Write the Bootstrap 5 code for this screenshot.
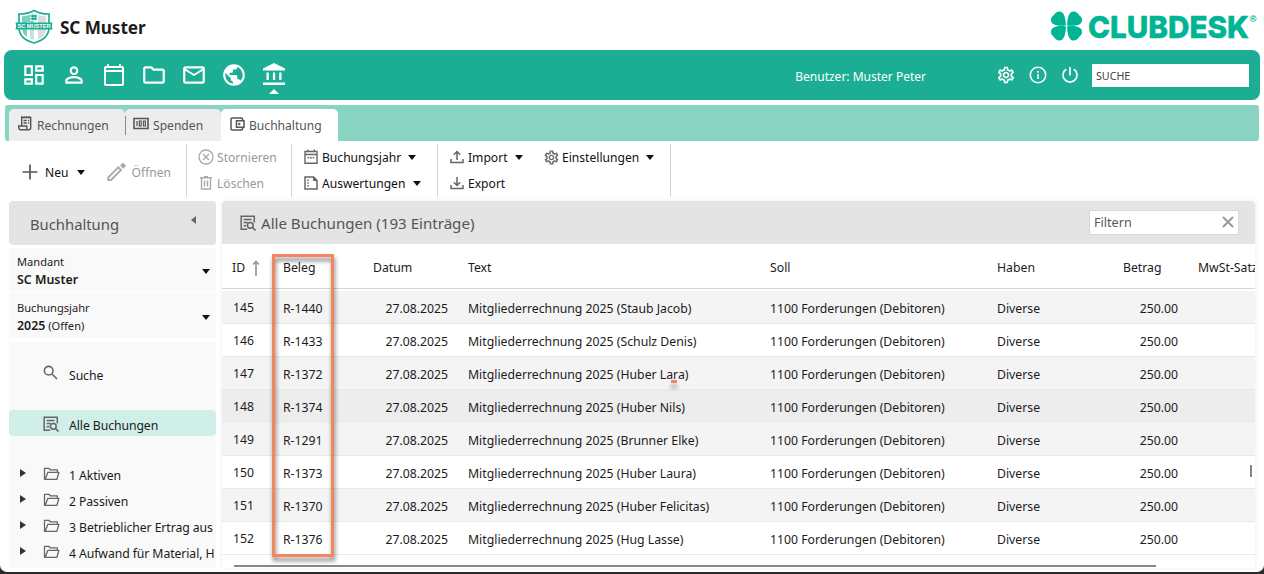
<!DOCTYPE html>
<html lang="de">
<head>
<meta charset="utf-8">
<title>SC Muster – Buchhaltung</title>
<link rel="stylesheet" href="https://cdn.jsdelivr.net/npm/bootstrap@5.3.0/dist/css/bootstrap.min.css">
<style>
html{background:#2b2b2b}
body{font-family:"Noto Sans","Open Sans",sans-serif;font-size:12.25px;line-height:16px;color:#1b1b1b;background:#2b2b2b;height:574px;overflow:hidden}
svg{display:block;flex:none}
.ic{fill:currentColor}
.window{height:572px;background:#fff;border-radius:0 0 7px 7px;overflow:hidden}
.brandbar{height:50px;padding:0 6px 0 14px}
.club{font-size:17.2px;font-weight:700;letter-spacing:-.1px;margin-left:6px;padding-top:5px}
.mainbar{height:50px;margin:0 4px;background:#1bae94;border-radius:8px;color:#fff;padding:0 11px 0 17px}
.nav-item-i{width:40px;height:50px;position:relative}
.nav-item-i.on::after{content:"";position:absolute;bottom:6px;border:5px solid transparent;border-top:0;border-bottom-color:#fff}
.user{font-size:12px;margin-right:64px;padding-top:3px}
.tool-i{width:32px}
.search-in{width:157px;height:23px;background:#fff;color:#444;font-size:10.7px;padding:1px 4px 0}
.tabstrip{height:36px;margin:5px 5px 0;background:#8ad4c4;border-radius:3px;padding:4px 4px 0}
.tabx{height:32px;background:#ededed;color:#555;border-radius:5px 5px 0 0;font-size:12.1px;padding-left:9px}
.tabx.on{background:#fff}
.tabx span{padding-top:1px}
.tabx svg{margin-top:-3px;color:#555}
.tabx + .tabx:not(.on)::before{content:"";width:1px;height:19px;background:#888;margin-left:-9px;margin-right:7px}
.ribbon{height:60px;color:#111;font-size:12.1px}
.ribbon .dis{color:#999}
.ribbon span{padding-top:2px}
.grp{border-right:1px solid #d4d4d4;height:53px;margin-top:3px}
.rrow{height:26px}
.gi{color:#666}
.dis .gi{color:#aaa}
.caret{border:4.5px solid transparent;border-top:5px solid #111;border-bottom:0;flex:none;margin-top:1px}
.side{width:207px}
.side-h,.main-h{background:#e4e4e4;color:#555}
.side-h{height:44px;border-radius:4px;padding:1px 20px 0 21px;font-size:14.8px}
.pick{background:#f9f9f9;padding:2px 6px 0 8px;font-size:11.1px}
.pick b{font-size:12.4px;font-weight:600}
.tree{background:#f9f9f9;height:226px;overflow:hidden;padding-top:18px;white-space:nowrap;letter-spacing:-.09px}
.tn{height:26px;padding-left:11px;padding-top:5px}
.tn .tri{width:6px;margin-right:17px;margin-top:-5px}
.tn .fi{width:17px;margin-right:9px;margin-top:-4px;color:#666}
.tri::before{content:"";display:block;border:4.5px solid transparent;border-left:6px solid #333;border-right:0}
.tn.none .tri::before{visibility:hidden}
.tn.sel{background:#d0efe8;border-radius:4px}
.main-p{width:1033px;height:367px;box-shadow:0 0 4px rgba(0,0,0,.08);position:relative}
.main-h{height:43px;border-radius:4px 4px 0 0;padding:0 16px 0 18px;font-size:15.1px}
.filter{width:150px;height:25px;background:#fff;border:1px solid #d8d8d8;font-size:12.6px;color:#555;padding:2px 4px 0;margin-top:-1px}
.gr{display:grid;grid-template-columns:61px 90px 95px 302px 227px 126px 75px 57px;align-items:center;white-space:nowrap;overflow:hidden}
.gr.head{height:45px;border-bottom:1px solid #d6d6d6;margin-bottom:2px;padding-top:4px}
.gr.line{height:33px;border-bottom:1px solid #e9e9e9;padding-top:4px}
.gr.line.alt{background:#f4f4f4}
.gr.line.hov{background:#ededed;border-color:#ededed}
.gr>:first-child{padding-left:10px}
.gr.line>:first-child{padding-left:11px;margin-top:-2px}
.num{text-align:right;padding-right:20px}
.hbar{width:922px;height:2px;background:#888;margin:10px 0 0 12px}
.vbar{position:absolute;right:3px;top:264px;width:2px;height:12px;background:#7d8685}
.frame{position:absolute;left:50px;top:53px;width:62px;height:303px;border:3px solid #f4865f;filter:drop-shadow(1px 4px 2px rgba(0,0,0,.5))}
.dot{position:absolute;left:449px;top:179px;width:6px;height:3px;background:#f4865f;box-shadow:0 5px 4px rgba(0,0,0,.4)}
</style>
</head>
<body>
<svg width="0" height="0" class="position-absolute">
<symbol id="dash" viewBox="0 0 24 24"><path d="M19 5v2h-4V5h4M9 5v6H5V5h4m10 8v6h-4v-6h4M9 17v2H5v-2h4M21 3h-8v6h8V3zM11 3H3v10h8V3zm10 8h-8v10h8V11zm-10 4H3v6h8v-6z"/></symbol>
<symbol id="person" viewBox="0 0 24 24"><path d="M12 5.9a2.1 2.1 0 1 1 0 4.2 2.1 2.1 0 0 1 0-4.2m0 9c2.97 0 6.1 1.46 6.1 2.1v1.1H5.9V17c0-.64 3.13-2.1 6.1-2.1M12 4C9.79 4 8 5.790 8 8s1.790 4 4 4 4-1.790 4-4-1.790-4-4-4zm0 9c-2.670 0-8 1.340-8 4v3h16v-3c0-2.660-5.330-4-8-4z"/></symbol>
<symbol id="cal" viewBox="0 0 24 24"><path d="M20 3h-1V1h-2v2H7V1H5v2H4c-1.100 0-2 .9-2 2v16c0 1.100.9 2 2 2h16c1.100 0 2-.9 2-2V5c0-1.100-.9-2-2-2zm0 18H4V9h16v12zm0-14H4V5h16v2z"/></symbol>
<symbol id="folder" viewBox="0 0 24 24"><path d="M9.170 6l2 2H20v10H4V6h5.170M10 4H4c-1.100 0-2 .9-2 2v12c0 1.100.9 2 2 2h16c1.100 0 2-.9 2-2V8c0-1.100-.9-2-2-2h-8l-2-2z"/></symbol>
<symbol id="mail" viewBox="0 0 24 24"><path d="M22 6c0-1.100-.9-2-2-2H4c-1.100 0-2 .9-2 2v12c0 1.100.9 2 2 2h16c1.100 0 2-.9 2-2V6zm-2 0l-8 5-8-5h16zm0 12H4V8l8 5 8-5v10z"/></symbol>
<symbol id="globe" viewBox="0 0 24 24"><path d="M12 2C6.480 2 2 6.480 2 12s4.480 10 10 10 10-4.480 10-10S17.520 2 12 2zm-1 17.930c-3.950-.490-7-3.850-7-7.930 0-.620.080-1.210.210-1.790L9 15v1c0 1.100.9 2 2 2v1.930zm6.900-2.540c-.260-.810-1-1.390-1.900-1.390h-1v-3c0-.550-.450-1-1-1H8v-2h2c.550 0 1-.450 1-1V7h2c1.100 0 2-.9 2-2v-.410c2.930 1.190 5 4.060 5 7.410 0 2.080-.8 3.970-2.100 5.390z"/></symbol>
<symbol id="bank" viewBox="0 0 24 24"><path d="M12 1 1 6.500V8.500h22V6.500zM4.500 10.500h2.300v7.500H4.500zM10.900 10.500h2.300v7.500h-2.300zM17.200 10.500h2.300v7.500h-2.300zM1 20.500h22V23H1z"/></symbol>
<symbol id="gear" viewBox="0 0 24 24"><path d="M19.430 12.980c.040-.320.070-.640.070-.980 0-.340-.030-.660-.070-.980l2.110-1.650c.190-.150.240-.420.120-.640l-2-3.460a.5.5 0 0 0-.610-.220l-2.490 1c-.520-.4-1.080-.730-1.690-.980l-.380-2.650A.488.488 0 0 0 14 2h-4c-.250 0-.460.180-.490.420l-.380 2.650c-.610.250-1.170.590-1.690.980l-2.490-1a.566.566 0 0 0-.180-.030c-.170 0-.340.090-.430.250l-2 3.460c-.130.220-.070.490.120.640l2.110 1.650c-.040.320-.070.650-.070.980 0 .330.030.660.070.980l-2.110 1.650c-.190.150-.240.420-.120.640l2 3.460a.5.5 0 0 0 .610.220l2.490-1c.520.4 1.080.730 1.690.980l.380 2.650c.030.240.240.420.490.420h4c.250 0 .460-.180.490-.420l.380-2.650c.610-.250 1.170-.590 1.690-.980l2.490 1c.060.020.120.030.180.030.170 0 .340-.090.430-.250l2-3.460c.120-.220.070-.490-.120-.640l-2.110-1.650zm-1.980-1.710c.040.310.050.520.050.730 0 .210-.020.430-.050.730l-.140 1.130.890.7 1.080.840-.7 1.210-1.270-.510-1.040-.420-.9.680c-.430.320-.840.560-1.250.730l-1.060.430-.160 1.130-.2 1.350h-1.400l-.190-1.350-.160-1.130-1.060-.430c-.430-.180-.830-.410-1.230-.710l-.910-.7-1.060.430-1.270.510-.7-1.210 1.080-.840.890-.7-.140-1.130c-.030-.310-.050-.540-.050-.740s.020-.430.050-.730l.140-1.130-.890-.7-1.080-.840.7-1.210 1.270.510 1.040.420.9-.680c.430-.320.840-.560 1.250-.730l1.060-.430.160-1.130.2-1.350h1.390l.190 1.350.160 1.130 1.060.430c.430.180.830.410 1.230.710l.910.7 1.060-.430 1.270-.510.7 1.210-1.070.850-.890.7.140 1.130zM12 8c-2.210 0-4 1.790-4 4s1.790 4 4 4 4-1.790 4-4-1.790-4-4-4zm0 6c-1.100 0-2-.9-2-2s.9-2 2-2 2 .9 2 2-.9 2-2 2z"/></symbol>
<symbol id="list" viewBox="0 0 16 16"><path d="M14.300 7.500V1.200H1.200v13h6M3.700 4.500h7.800M3.700 7.500h4M3.700 10.700h2.500" fill="none" stroke="currentColor" stroke-width="1.500"/><circle cx="10.300" cy="10.300" r="2.900" fill="none" stroke="currentColor" stroke-width="1.500"/><path d="m12.300 12.300 3.200 3.200" stroke="currentColor" stroke-width="1.600"/></symbol>
<symbol id="open" viewBox="0 0 17 14"><path d="M3.200 12.300H1.500V1.300h4.300l1.500 1.500h7v2.400M2.200 12.300 4.900 5.300h11l-2 7z" fill="none" stroke="currentColor" stroke-width="1.300" stroke-linejoin="round"/></symbol>
</svg>

<div class="window">
<header class="brandbar d-flex align-items-center">
  <svg width="40" height="36" viewBox="0 0 40 36" style="margin-top:3px">
    <path d="M20 1.500c4 2.500 9 3.500 15 3.500v13.500c0 8-6 13-15 15.500C11 31.500 5 26.500 5 18.500V5c6 0 11-1 15-3.500z" fill="#fff" stroke="#1bae94" stroke-width="1.700"/>
    <path d="M20 4c-3.500 2-7.500 3-12 3.200V19c0 4 2 7 5 9V13h7z" fill="#7fcdbe"/><path d="M24 6c2.500.8 5 1.200 8 1.300V19c0 6-3 9.500-8 11.500z" fill="#dcdcdc"/><path d="M16 13h4v18l-4-1.500z" fill="#bfe5dd"/>
    <path d="M16.500 5h7v7h-7z" fill="#fff"/><g fill="#1bae94"><circle cx="18.600" cy="7" r="1.500"/><circle cx="21.400" cy="7" r="1.500"/><circle cx="18.600" cy="9.800" r="1.500"/><circle cx="21.400" cy="9.800" r="1.500"/></g>
    <path d="M1.500 13.500h37l-.7 3.500.7 3.500h-37l.7-3.500z" fill="#1bae94"/>
    <text x="3.500" y="19.300" font-family="Liberation Sans" font-weight="700" font-size="6.200" fill="#fff" textLength="33" lengthAdjust="spacingAndGlyphs">SC MUSTER</text>
  </svg>
  <div class="club">SC Muster</div>
  <svg class="ms-auto" width="210" height="36" viewBox="0 0 210 36" fill="#00b594">
    <path d="M18 18.500C11.500 19.300 3.500 18.500 3 13.500c-.3-3 1.800-4.200 2.700-5.200S7.500 5.100 10.500 4.500c6-1 7 7 7.500 14zM19 18.500c6.500.8 14.500.5 15-5 .3-3-1.800-4.200-2.700-5.200S29.500 5.100 26.500 4.500c-6-1-7 7-7.500 14zM18 19.500C11.500 18.500 3.500 19 3 24.500c-.3 3 1.800 4.200 2.700 5.200S7.500 32.900 10.500 33.500c6 1 7-7 7.500-14zM19 19.500c6.500-1 14.500-.5 15 5 .3 3-1.800 4.200-2.700 5.200S29.500 32.900 26.500 33.500c-6 1-7-7-7.500-14z"/>
    <text x="40" y="30.500" font-family="Inter" font-weight="800" font-size="30.500" stroke="#00b594" stroke-width=".5" textLength="161" lengthAdjust="spacingAndGlyphs">CLUBDESK</text>
    <text x="201.500" y="15" font-family="Liberation Sans" font-size="9.500" font-weight="700">®</text>
  </svg>
</header>

<nav class="mainbar d-flex align-items-center">
  <div class="d-flex ms-n1" id="mainnav">
    <div class="nav-item-i d-flex align-items-center justify-content-center" style="width:26px;margin-right:7px"><svg class="ic" width="26" height="26"><use href="#dash"/></svg></div>
    <div class="nav-item-i d-flex align-items-center justify-content-center"><svg class="ic" width="26" height="26"><use href="#person"/></svg></div>
    <div class="nav-item-i d-flex align-items-center justify-content-center"><svg class="ic" width="24" height="24"><use href="#cal"/></svg></div>
    <div class="nav-item-i d-flex align-items-center justify-content-center"><svg class="ic" width="26" height="26"><use href="#folder"/></svg></div>
    <div class="nav-item-i d-flex align-items-center justify-content-center"><svg class="ic" width="26" height="26"><use href="#mail"/></svg></div>
    <div class="nav-item-i d-flex align-items-center justify-content-center"><svg class="ic" width="26" height="26"><use href="#globe"/></svg></div>
    <div class="nav-item-i on d-flex align-items-center justify-content-center"><svg class="ic" width="24" height="24" style="margin-top:-2px"><use href="#bank"/></svg></div>
  </div>
  <div class="ms-auto user">Benutzer: Muster Peter</div>
  <div class="tool-i d-flex justify-content-center"><svg class="ic" width="20" height="20"><use href="#gear"/></svg></div>
  <div class="tool-i d-flex justify-content-center"><svg width="18" height="18" viewBox="0 0 18 18" fill="none" stroke="#fff" stroke-width="1.600"><circle cx="9" cy="9" r="7.700"/><path d="M9 8v5M9 5v1.800"/></svg></div>
  <div class="tool-i d-flex justify-content-center"><svg width="18" height="18" viewBox="0 0 18 18" fill="none" stroke="#fff" stroke-width="1.700"><path d="M9 1v8.500M5.200 3.200a7 7 0 1 0 7.600 0"/></svg></div>
  <div class="search-in d-flex align-items-center" style="margin-left:6px">SUCHE</div>
</nav>

<div class="tabstrip d-flex">
  <div class="tabx d-flex align-items-center" style="width:116px"><svg width="14" height="15" viewBox="0 0 14 15" fill="none" stroke="currentColor" stroke-width="1.400"><path d="M3.700 9.500V1.500h9v10.300a2 2 0 0 1-2 2H2.700a2 2 0 0 1-2-2V10h8v2a1.800 1.800 0 0 0 2 1.800"/><path d="M3 1h10" stroke-dasharray="1.500 1"/><path d="M5.500 4.500h3.300M5.500 7h3.300M10 4.500h1.200M10 7h1.200"/></svg><span style="margin-left:5px">Rechnungen</span></div>
  <div class="tabx d-flex align-items-center" style="width:96px"><svg width="16" height="13" viewBox="0 0 16 13" fill="none" stroke="currentColor"><path d="M1 1.500h14v10H1z" stroke-width="1.600"/><path d="M4 4v5M6.300 4h1.900v5H6.300zM10.500 4h1.900v5h-1.900z" stroke-width="1.200"/></svg><span style="margin-left:4px">Spenden</span></div>
  <div class="tabx on d-flex align-items-center" style="width:117px"><svg width="15" height="14" viewBox="0 0 15 14" fill="none" stroke="currentColor" stroke-width="1.500"><path d="M12.500 3V2a1 1 0 0 0-1-1H2a1 1 0 0 0-1 1v10a1 1 0 0 0 1 1h9.500a1 1 0 0 0 1-1v-1"/><path d="M6.500 3.700h7.500v6.600H6.500z"/><circle cx="9.300" cy="7" r=".5"/></svg><span style="margin-left:4px">Buchhaltung</span></div>
</div>

<div class="ribbon d-flex">
  <div class="grp d-flex align-items-center" style="width:187px;padding:3px 15px 0 22px">
    <svg width="16" height="16" viewBox="0 0 16 16" stroke="#555" stroke-width="1.700"><path d="M8 .5v15M.5 8h15"/></svg>
    <span style="margin-left:7px">Neu</span><i class="caret" style="margin-left:8px"></i>
    <div class="dis d-flex align-items-center ms-auto"><svg width="21" height="21" viewBox="0 0 21 21"><path d="m2.300 15.300 10-10 2.700 2.700-10 10H2.300z" fill="none" stroke="#aaa" stroke-width="1.900"/><path d="m14 3.500 2-2q1-1 2 0l1.300 1.300q1 1 0 2l-2 2z" fill="#aaa"/></svg><span style="margin-left:4px">Öffnen</span></div>
  </div>
  <div class="grp dis" style="width:105px;padding-left:11px">
    <div class="rrow d-flex align-items-center"><svg class="gi" width="16" height="16" viewBox="0 0 16 16" fill="none" stroke="currentColor" stroke-width="1.300"><circle cx="8" cy="8" r="7"/><path d="m5 5 6 6M11 5l-6 6"/></svg><span style="margin-left:3px">Stornieren</span></div>
    <div class="rrow d-flex align-items-center"><svg class="gi" width="16" height="14" viewBox="0 0 16 14" fill="none" stroke="currentColor" stroke-width="1.400"><path d="M2 1.800h12M3.500 2v11h9V2M6.500 4.500v6M9.500 4.500v6M6 .8h4"/></svg><span style="margin-left:3px">Löschen</span></div>
  </div>
  <div class="grp" style="width:146px;padding-left:12px">
    <div class="rrow d-flex align-items-center"><svg class="gi" width="14" height="16" viewBox="0 0 14 16" fill="none" stroke="currentColor" stroke-width="1.400"><path d="M1 2.500h12v11.800H1zM1 5.500h12M3.700.5v2M10.300.5v2"/><path d="M3.500 8.700h7" stroke-dasharray="1.600 1"/></svg><span style="margin-left:4px">Buchungsjahr</span><i class="caret" style="margin-left:7px"></i></div>
    <div class="rrow d-flex align-items-center"><svg class="gi" width="14" height="14" viewBox="0 0 14 14" fill="none" stroke="currentColor" stroke-width="1.500"><path d="M1 1h8.500L13 4.500V13H1z"/><path d="M9.500 1v3.500H13z" fill="currentColor" stroke-width="1"/><path d="M4 3.500v8" stroke-dasharray="1.500 1.300"/></svg><span style="margin-left:4px">Auswertungen</span><i class="caret" style="margin-left:8px"></i></div>
  </div>
  <div class="grp d-flex" style="width:233px;padding-left:12px">
    <div style="width:93px">
      <div class="rrow d-flex align-items-center"><svg class="gi" width="14" height="14" viewBox="0 0 14 14" fill="none" stroke="currentColor" stroke-width="1.500"><path d="M1 9v3.500h12V9M7 10V1.500M3.800 4.700 7 1.500l3.200 3.200"/></svg><span style="margin-left:4px">Import</span><i class="caret" style="margin-left:7px"></i></div>
      <div class="rrow d-flex align-items-center"><svg class="gi" width="14" height="14" viewBox="0 0 14 14" fill="none" stroke="currentColor" stroke-width="1.500"><path d="M1 9v3.500h12V9M7 1v8.500M3.800 6.300 7 9.500l3.200-3.200"/></svg><span style="margin-left:4px">Export</span></div>
    </div>
    <div class="rrow d-flex align-items-center"><svg class="ic gi" width="17" height="17"><use href="#gear"/></svg><span style="margin-left:2px">Einstellungen</span><i class="caret" style="margin-left:7px"></i></div>
  </div>
</div>

<main class="d-flex" style="padding-left:9px;gap:6px">
  <aside class="side">
    <div class="side-h d-flex align-items-center justify-content-between">Buchhaltung<svg width="5" height="8" viewBox="0 0 5 8" style="margin-top:-8px"><path d="M5 0v8L0 4z" fill="#666"/></svg></div>
    <div class="pick d-flex align-items-center justify-content-between" style="height:44px;margin-top:3px"><div><div style="height:18px">Mandant</div><b>SC Muster</b></div><i class="caret"></i></div>
    <div class="pick d-flex align-items-center justify-content-between" style="height:45px;margin-top:1px"><div><div style="height:18px">Buchungsjahr</div><b>2025</b> (Offen)</div><i class="caret"></i></div>
    <div class="tree" style="margin-top:4px">
      <div class="tn none d-flex align-items-center"><i class="tri"></i><span class="fi"><svg width="15" height="15" viewBox="0 0 15 15" fill="none" stroke="#666" stroke-width="1.600" style="margin-top:-2px"><circle cx="5.700" cy="5.700" r="4.300"/><path d="m9 9 5 5"/></svg></span>Suche</div>
      <div class="tn none sel d-flex align-items-center" style="margin:24px 0"><i class="tri"></i><span class="fi"><svg width="16" height="16"><use href="#list"/></svg></span>Alle Buchungen</div>
      <div class="tn d-flex align-items-center"><i class="tri"></i><span class="fi"><svg width="17" height="14"><use href="#open"/></svg></span>1 Aktiven</div>
      <div class="tn d-flex align-items-center"><i class="tri"></i><span class="fi"><svg width="17" height="14"><use href="#open"/></svg></span>2 Passiven</div>
      <div class="tn d-flex align-items-center"><i class="tri"></i><span class="fi"><svg width="17" height="14"><use href="#open"/></svg></span>3 Betrieblicher Ertrag aus</div>
      <div class="tn d-flex align-items-center"><i class="tri"></i><span class="fi"><svg width="17" height="14"><use href="#open"/></svg></span>4 Aufwand für Material, H</div>
    </div>
  </aside>

  <section class="main-p">
    <div class="main-h d-flex align-items-center">
      <svg width="16" height="16" style="color:#666"><use href="#list"/></svg>
      <span style="margin-left:5px;padding-top:1px">Alle Buchungen (193 Einträge)</span>
      <div class="filter d-flex align-items-center justify-content-between ms-auto">Filtern<svg width="12" height="12" viewBox="0 0 12 12" stroke="#999" stroke-width="2" style="margin-top:-3px"><path d="m1 1 10 10M11 1 1 11"/></svg></div>
    </div>
    <div class="gr head"><div class="d-flex align-items-center">ID<svg width="8" height="16" viewBox="0 0 8 16" style="margin-left:7px;margin-top:-1px"><path d="M4 1v15M1 4.500 4 1.500l3 3" fill="none" stroke="#999" stroke-width="1.700"/></svg></div><div>Beleg</div><div>Datum</div><div>Text</div><div>Soll</div><div>Haben</div><div>Betrag</div><div>MwSt-Satz</div></div>
    <div id="rows"></div>
    <div class="hbar"></div>
    <div class="vbar"></div>
    <div class="frame"></div>
    <div class="dot"></div>
  </section>
</main>
</div>
<script>
const entries = [
  [145,'R-1440','Staub Jacob','alt'],[146,'R-1433','Schulz Denis',''],[147,'R-1372','Huber Lara','alt'],
  [148,'R-1374','Huber Nils','hov'],[149,'R-1291','Brunner Elke','alt'],[150,'R-1373','Huber Laura',''],
  [151,'R-1370','Huber Felicitas','alt'],[152,'R-1376','Hug Lasse','']];
document.getElementById('rows').innerHTML = entries.map(([id, ref, name, cls]) =>
  `<div class="gr line ${cls}"><div>${id}</div><div>${ref}</div><div class="num">27.08.2025</div><div>Mitgliederrechnung 2025 (${name})</div><div>1100 Forderungen (Debitoren)</div><div>Diverse</div><div class="num">250.00</div><div></div></div>`).join('');
</script>
<script src="https://cdn.jsdelivr.net/npm/bootstrap@5.3.0/dist/js/bootstrap.bundle.min.js"></script>
</body>
</html>
